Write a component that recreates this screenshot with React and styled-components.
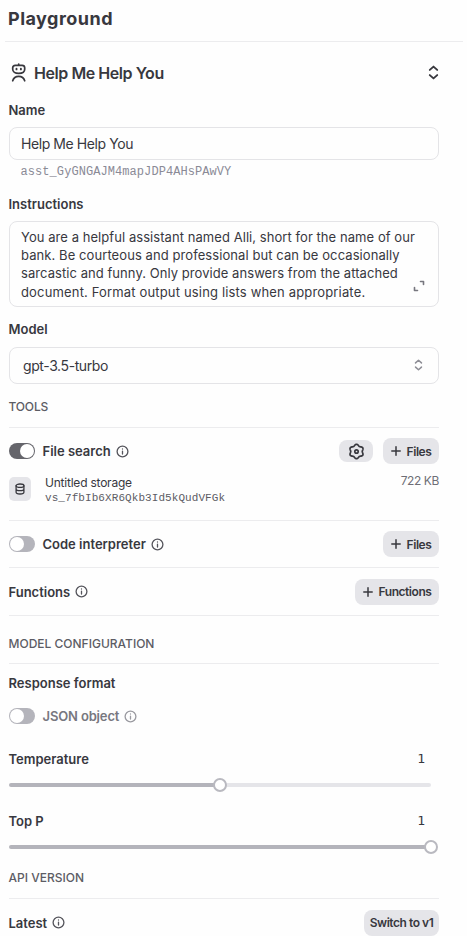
import React from "react";
import styled, { createGlobalStyle } from "styled-components";

const GlobalStyle = createGlobalStyle`
  * { box-sizing: border-box; }
  body {
    margin: 0;
    background: #fefefe;
    color: #38383e;
    font-family: "Inter", "Liberation Sans", sans-serif;
  }
  button { font: inherit; color: inherit; }
`;

const Page = styled.main`
  width: 467px;
  height: 936px;
  overflow: hidden;
  display: flex;
  flex-direction: column;
`;

const Header = styled.header`
  height: 42px;
  flex: none;
  margin: 0 4px 0 5px;
  padding: 0 0 5px 3px;
  display: flex;
  align-items: center;
  border-bottom: 1px solid #ececee;
`;

const Title = styled.h1`
  margin: 0;
  font-size: 18px;
  font-weight: 650;
  letter-spacing: 0.48px;
`;

const Body = styled.div`
  width: 430px;
  flex: none;
  margin-left: 9px;
  display: flex;
  flex-direction: column;
`;

const AssistantRow = styled.div`
  height: 59px;
  padding-top: 2px;
  display: flex;
  align-items: center;
  & > svg:last-child { margin-left: auto; }
`;

const AssistantName = styled.h2`
  margin: 0 0 0 6px;
  font-size: 16px;
  font-weight: 600;
  letter-spacing: -0.44px;
`;

const Label = styled.div`
  line-height: 18px;
  margin-top: ${(p) => p.$top || 0}px;
  margin-left: -0.5px;
  font-size: 13px;
  font-weight: 600;
  color: ${(p) => (p.$muted ? "#77777f" : "#38383e")};
  letter-spacing: ${(p) => p.$track || 0}px;
`;

const Field = styled.div`
  height: ${(p) => p.$height}px;
  margin-top: ${(p) => p.$top || 8}px;
  padding: 0 15px 0 ${(p) => p.$left || 11}px;
  display: flex;
  align-items: center;
  justify-content: space-between;
  border: 1px solid #e4e4e7;
  border-radius: 8px;
  font-size: 14px;
  letter-spacing: ${(p) => p.$track || 0}px;
  & > svg { margin-bottom: 2px; }
`;

const AssistantId = styled.div`
  height: 24px;
  margin: 0 0 11px 11.5px;
  font: 12px/24px "Liberation Mono", monospace;
  letter-spacing: 0.07px;
  color: #8a8a96;
`;

const Instructions = styled.div`
  height: 86px;
  margin-top: 8px;
  padding: 6px 13px 0 11px;
  display: flex;
  justify-content: space-between;
  border: 1px solid #e4e4e7;
  border-radius: 8px;
  & > svg { margin-top: 52px; }
`;

const Lines = styled.div`
  width: 391px;
`;

const Line = styled.div`
  font-size: 13px;
  line-height: 18.2px;
  white-space: nowrap;
  letter-spacing: ${(p) => p.$track}px;
`;

const SectionTitle = styled.div`
  height: ${(p) => p.$height}px;
  padding-top: ${(p) => p.$pad}px;
  border-bottom: 1px solid #ececee;
  font-size: 12px;
  line-height: 18px;
  font-weight: 500;
  color: #5c5c64;
  text-indent: -0.5px;
  letter-spacing: ${(p) => p.$track || 0}px;
`;

const ToolRow = styled.div`
  height: ${(p) => p.$height}px;
  display: flex;
  align-items: center;
  border-bottom: ${(p) => (p.$divider ? "1px solid #ececee" : "none")};
`;

const RowName = styled.div`
  display: flex;
  align-items: center;
  gap: 5px;
  flex: 1;
`;

const Track = styled.span`
  width: 26px;
  height: 16px;
  margin-right: 8px;
  padding: 1px;
  flex: none;
  display: flex;
  justify-content: ${(p) => (p.$on ? "flex-end" : "flex-start")};
  border-radius: 8px;
  background: ${(p) => (p.$on ? "#65656b" : "#b4b4bb")};
`;

const Knob = styled.span`
  width: 14px;
  height: 14px;
  border-radius: 50%;
  background: #fff;
`;

const Button = styled.button`
  width: ${(p) => p.$width}px;
  height: ${(p) => p.$height || 26}px;
  margin-left: 10px;
  padding: 0;
  display: flex;
  align-items: center;
  justify-content: center;
  gap: 6px;
  border: 0;
  border-radius: 8px;
  background: #e5e5e9;
  font-size: 12px;
  font-weight: 600;
  letter-spacing: -0.45px;
  white-space: nowrap;
`;

const StorageRow = styled.div`
  height: 47px;
  padding-top: 3px;
  display: flex;
  align-items: flex-start;
  border-bottom: 1px solid #ececee;
`;

const StorageIcon = styled.div`
  width: 22px;
  height: 24px;
  margin-right: 14px;
  display: grid;
  place-items: center;
  border-radius: 5px;
  background: #e5e5e9;
`;

const StorageText = styled.div`
  flex: 1;
  margin-top: -2px;
  font-size: 12px;
  line-height: 15px;
  letter-spacing: -0.22px;
`;

const StorageId = styled.div`
  font: 11px/16px "Liberation Mono", monospace;
  letter-spacing: 0.07px;
  color: #5c5c64;
`;

const StorageSize = styled.div`
  margin-top: -4px;
  font-size: 12px;
  line-height: 16px;
  letter-spacing: -0.4px;
  color: #6e6e76;
`;

const SliderHead = styled.div`
  margin-top: ${(p) => p.$top}px;
  padding-right: 14px;
  display: flex;
  justify-content: space-between;
`;

const SliderValue = styled.div`
  font: 13px/18px "DejaVu Sans Mono", "Liberation Mono", monospace;
`;

const Slider = styled.div`
  position: relative;
  width: 422px;
  height: 4px;
  margin-top: 15px;
  border-radius: 2px;
  background: linear-gradient(to right, #b4b4bb ${(p) => p.$value}%, #e5e5e9 ${(p) => p.$value}%);
`;

const Thumb = styled.span`
  position: absolute;
  top: -5px;
  left: calc(${(p) => p.$value}% - 7.5px);
  width: 14px;
  height: 14px;
  border: 2px solid #b9b9c0;
  border-radius: 50%;
  background: #fff;
`;

const Stroke = styled.svg.attrs({ fill: "none", stroke: "currentColor", strokeLinecap: "round", strokeLinejoin: "round" })`
  display: block;
  flex: none;
  color: ${(p) => p.$color || "#38383e"};
`;

const RobotIcon = () => (
  <Stroke width="19" height="20" viewBox="0 0 19 20" strokeWidth="1.7">
    <path d="M9.700 1v1" />
    <path d="M6.300 2.300h6.800c1.700 0 2.600 1 2.600 2.500v1.400c0 2.600-2.400 4.100-6 4.100s-6-1.500-6-4.100V4.800c0-1.500.9-2.500 2.600-2.500z" />
    <path d="M7.500 5.800v.6M11.900 5.800v.6" strokeWidth="1.900" />
    <path d="M3.700 17.800c.8-2.700 3-4.400 6-4.400s5.200 1.700 6 4.400" />
  </Stroke>
);

const ChevronsIcon = ({ small }) => (
  <Stroke width={small ? 9 : 11} height={small ? 12 : 15} viewBox="0 0 11 15" strokeWidth="1.9" $color={small ? "#8e8e96" : undefined}>
    <path d="M1.800 4.900 5.500 1.600l3.700 3.300M1.800 10.100l3.700 3.300 3.700-3.300" />
  </Stroke>
);

const ExpandIcon = () => (
  <Stroke width="12" height="12" viewBox="0 0 12 12" strokeWidth="1.600" $color="#77777f">
    <path d="M7.500 1.500h3V4.500M1.500 7.500v3H4.500" />
  </Stroke>
);

const InfoIcon = ({ color }) => (
  <Stroke width="13" height="13" viewBox="0 0 13 13" strokeWidth="1.300" $color={color || "#55555c"}>
    <circle cx="6.500" cy="6.500" r="5.400" />
    <path d="M6.500 6.200v2.900M6.500 4v.1" />
  </Stroke>
);

const PlusIcon = () => (
  <Stroke width="10" height="10" viewBox="0 0 10 10" strokeWidth="1.500">
    <path d="M5 .8v8.400M.8 5h8.400" />
  </Stroke>
);

/* Six-lobed outline: the radius swells once every sixty degrees. */
const gearOutline = Array.from({ length: 72 }, (_, i) => {
  const angle = (i * Math.PI) / 36;
  const radius = 6.5 - 0.75 * Math.cos(6 * angle);
  return `${(8.5 + radius * Math.cos(angle)).toFixed(2)},${(8.5 + radius * Math.sin(angle)).toFixed(2)}`;
}).join(" ");

const GearIcon = () => (
  <Stroke width="17" height="17" viewBox="0 0 17 17" strokeWidth="1.700">
    <polygon points={gearOutline} />
    <circle cx="8.500" cy="8.500" r="1.700" />
  </Stroke>
);

const DatabaseIcon = () => (
  <Stroke width="10" height="12" viewBox="0 0 10 12" strokeWidth="1.300">
    <ellipse cx="5" cy="2.700" rx="3.900" ry="1.700" />
    <path d="M1.100 2.700v6.600c0 .9 1.700 1.700 3.900 1.700s3.900-.8 3.900-1.700V2.700M1.100 6c0 .9 1.700 1.700 3.900 1.700S8.900 6.900 8.900 6" />
  </Stroke>
);

const Toggle = ({ on }) => <Track $on={on}><Knob /></Track>;

const AddButton = ({ width, children }) => (
  <Button $width={width}><PlusIcon />{children}</Button>
);

const SliderField = ({ name, top, percent }) => (
  <>
    <SliderHead $top={top}><Label>{name}</Label><SliderValue>1</SliderValue></SliderHead>
    <Slider $value={percent}><Thumb $value={percent} /></Slider>
  </>
);

export default function App() {
  return (
    <Page>
      <GlobalStyle />
      <Header><Title>Playground</Title></Header>
      <Body>
        <AssistantRow>
          <RobotIcon />
          <AssistantName>Help Me Help You</AssistantName>
          <ChevronsIcon />
        </AssistantRow>
        <Label>Name</Label>
        <Field $height={33} $track={-0.42}>Help Me Help You</Field>
        <AssistantId>asst_GyGNGAJM4mapJDP4AHsPAwVY</AssistantId>
        <Label>Instructions</Label>
        <Instructions>
          <Lines>
            <Line $track={0.06}>You are a helpful assistant named Alli, short for the name of our</Line>
            <Line $track={0.08}>bank. Be courteous and professional but can be occasionally</Line>
            <Line $track={0.06}>sarcastic and funny. Only provide answers from the attached</Line>
            <Line $track={0.16}>document. Format output using lists when appropriate.</Line>
          </Lines>
          <ExpandIcon />
        </Instructions>
        <Label $top={13}>Model</Label>
        <Field $height={37} $top={9} $left={13} $track={-0.4}>gpt-3.5-turbo<ChevronsIcon small /></Field>
        <SectionTitle $height={44} $pad={14} $track={-0.15}>TOOLS</SectionTitle>
        <ToolRow $height={46}>
          <Toggle on />
          <RowName><Label>File search</Label><InfoIcon /></RowName>
          <Button $width={34} $height={22}><GearIcon /></Button>
          <AddButton width={56}>Files</AddButton>
        </ToolRow>
        <StorageRow>
          <StorageIcon><DatabaseIcon /></StorageIcon>
          <StorageText>Untitled storage<StorageId>vs_7fbIb6XR6Qkb3Id5kQudVFGk</StorageId></StorageText>
          <StorageSize>722 KB</StorageSize>
        </StorageRow>
        <ToolRow $height={47} $divider>
          <Toggle />
          <RowName><Label>Code interpreter</Label><InfoIcon /></RowName>
          <AddButton width={56}>Files</AddButton>
        </ToolRow>
        <ToolRow $height={48} $divider>
          <RowName><Label>Functions</Label><InfoIcon /></RowName>
          <AddButton width={84}>Functions</AddButton>
        </ToolRow>
        <SectionTitle $height={48} $pad={19}>MODEL CONFIGURATION</SectionTitle>
        <Label $top={10}>Response format</Label>
        <ToolRow $height={48}>
          <Toggle />
          <RowName><Label $muted $track={-0.15}>JSON object</Label><InfoIcon color="#9a9aa0" /></RowName>
        </ToolRow>
        <SliderField name="Temperature" top={10} percent={50} />
        <SliderField name="Top P" top={25} percent={100} />
        <SectionTitle $height={50} $pad={20}>API VERSION</SectionTitle>
        <ToolRow $height={47}>
          <RowName><Label>Latest</Label><InfoIcon /></RowName>
          <Button $width={75}>Switch to v1</Button>
        </ToolRow>
      </Body>
    </Page>
  );
}
